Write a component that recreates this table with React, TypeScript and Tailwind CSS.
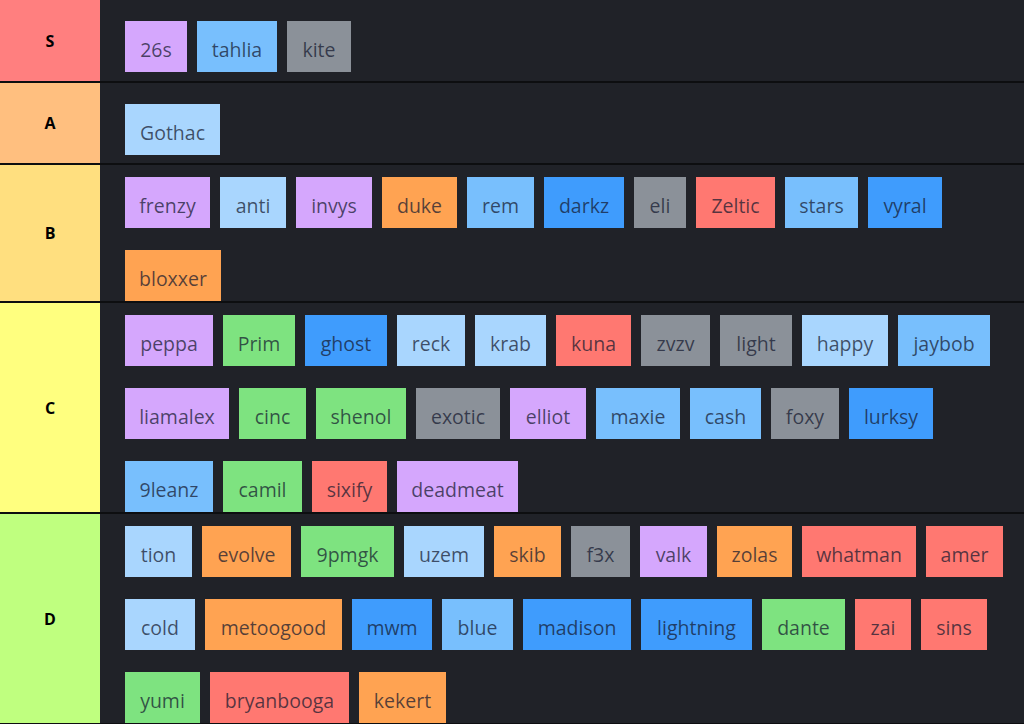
import React from "react";

type C = "pu" | "lb" | "mb" | "bl" | "gr" | "or" | "rd" | "gn";

const bg: Record<C, string> = {
  pu: "bg-[#d5a7fd]",
  lb: "bg-[#a9d6fe]",
  mb: "bg-[#78bffd]",
  bl: "bg-[#3f9cfd]",
  gr: "bg-[#8b9199]",
  or: "bg-[#ffa352]",
  rd: "bg-[#ff7871]",
  gn: "bg-[#7ee380]",
};

type T = [string, C, string];

const tiers: { label: string; color: string; first?: boolean; tags: T[] }[] = [
  {
    label: "S",
    color: "bg-[#ff7f7f]",
    first: true,
    tags: [
      ["26s", "pu", "w-[62px]"],
      ["tahlia", "mb", "w-[80px]"],
      ["kite", "gr", "w-[64px]"],
    ],
  },
  {
    label: "A",
    color: "bg-[#ffbf7f]",
    tags: [["Gothac", "lb", "w-[95px]"]],
  },
  {
    label: "B",
    color: "bg-[#ffdf7f]",
    tags: [
      ["frenzy", "pu", "w-[85px]"],
      ["anti", "lb", "w-[66px]"],
      ["invys", "pu", "w-[76px]"],
      ["duke", "or", "w-[75px]"],
      ["rem", "mb", "w-[67px]"],
      ["darkz", "bl", "w-[80px]"],
      ["eli", "gr", "w-[52px]"],
      ["Zeltic", "rd", "w-[79px]"],
      ["stars", "mb", "w-[73px]"],
      ["vyral", "bl", "w-[74px]"],
      ["bloxxer", "or", "w-[96px]"],
    ],
  },
  {
    label: "C",
    color: "bg-[#ffff7f]",
    tags: [
      ["peppa", "pu", "w-[88px]"],
      ["Prim", "gn", "w-[72px]"],
      ["ghost", "bl", "w-[82px]"],
      ["reck", "lb", "w-[68px]"],
      ["krab", "lb", "w-[71px]"],
      ["kuna", "rd", "w-[75px]"],
      ["zvzv", "gr", "w-[69px]"],
      ["light", "gr", "w-[72px]"],
      ["happy", "lb", "w-[86px]"],
      ["jaybob", "mb", "w-[92px]"],
      ["liamalex", "pu", "w-[104px]"],
      ["cinc", "gn", "w-[67px]"],
      ["shenol", "gn", "w-[90px]"],
      ["exotic", "gr", "w-[84px]"],
      ["elliot", "pu", "w-[76px]"],
      ["maxie", "mb", "w-[84px]"],
      ["cash", "mb", "w-[71px]"],
      ["foxy", "gr", "w-[68px]"],
      ["lurksy", "bl", "w-[84px]"],
      ["9leanz", "mb", "w-[88px]"],
      ["camil", "gn", "w-[79px]"],
      ["sixify", "rd", "w-[75px]"],
      ["deadmeat", "pu", "w-[121px]"],
    ],
  },
  {
    label: "D",
    color: "bg-[#bfff7f]",
    tags: [
      ["tion", "lb", "w-[67px]"],
      ["evolve", "or", "w-[89px]"],
      ["9pmgk", "gn", "w-[93px]"],
      ["uzem", "lb", "w-[80px]"],
      ["skib", "or", "w-[67px]"],
      ["f3x", "gr", "w-[59px]"],
      ["valk", "pu", "w-[67px]"],
      ["zolas", "or", "w-[75px]"],
      ["whatman", "rd", "w-[114px]"],
      ["amer", "rd", "w-[77px]"],
      ["cold", "lb", "w-[70px]"],
      ["metoogood", "or", "w-[137px]"],
      ["mwm", "bl", "w-[80px]"],
      ["blue", "mb", "w-[71px]"],
      ["madison", "bl", "w-[108px]"],
      ["lightning", "bl", "w-[111px]"],
      ["dante", "gn", "w-[83px]"],
      ["zai", "rd", "w-[56px]"],
      ["sins", "rd", "w-[66px]"],
      ["yumi", "gn", "w-[75px]"],
      ["bryanbooga", "rd", "w-[139px]"],
      ["kekert", "or", "w-[87px]"],
    ],
  },
];

export default function App() {
  return (
    <div
      className="w-[1024px] h-[724px] overflow-hidden bg-[#0d0e10] flex flex-col gap-[2px]"
      style={{ fontFamily: '"Open Sans", "Noto Sans", sans-serif' }}
    >
      {tiers.map((tier) => (
        <div key={tier.label} className="flex shrink-0">
          <div
            className={`w-[100px] shrink-0 flex items-center justify-center ${tier.color} text-[16px] font-bold text-black`}
          >
            {tier.label}
          </div>
          <div
            className={`flex-1 bg-[#202228] flex items-center pl-[25px] pr-[12px] ${
              tier.first ? "min-h-[81px]" : "min-h-[80px]"
            }`}
          >
            <div className="flex flex-wrap gap-x-[10px] gap-y-[22px] pt-[12px]">
              {tier.tags.map(([name, c, w]) => (
                <div
                  key={name}
                  className={`${w} h-[51px] ${bg[c]} flex items-center justify-center pt-[7px] text-[19.5px] leading-none text-[rgba(20,24,46,0.72)]`}
                >
                  {name}
                </div>
              ))}
            </div>
          </div>
        </div>
      ))}
    </div>
  );
}
